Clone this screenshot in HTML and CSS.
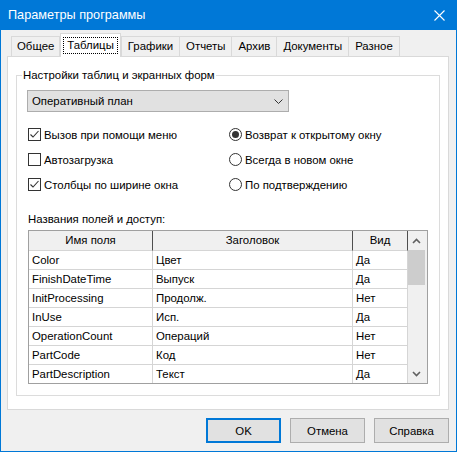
FILE: index.html
```html
<!DOCTYPE html>
<html lang="ru">
<head>
<meta charset="utf-8">
<title>Параметры программы</title>
<link rel="stylesheet" href="styles.css">
</head>
<body>
<div class="window">
  <div class="titlebar">
    <span class="title">Параметры программы</span>
    <svg class="close" width="11" height="11" viewBox="0 0 11 11"><path d="M0.5 0.5 L10.5 10.5 M10.5 0.5 L0.5 10.5" stroke="#fff" stroke-width="1.1" fill="none"/></svg>
  </div>
  <div class="client">
    <div class="tabs">
      <div class="tab">Общее</div>
      <div class="tab active"><span class="focus">Таблицы</span></div>
      <div class="tab">Графики</div>
      <div class="tab">Отчеты</div>
      <div class="tab">Архив</div>
      <div class="tab">Документы</div>
      <div class="tab">Разное</div>
    </div>
    <div class="panel">
      <fieldset class="group">
        <legend>Настройки таблиц и экранных форм</legend>
        <div class="select">
          <span>Оперативный план</span>
          <svg class="chev" width="9" height="5" viewBox="0 0 9 5"><path d="M0.5 0.5 L4.5 4.5 L8.5 0.5" stroke="#333" stroke-width="1" fill="none"/></svg>
        </div>
        <div class="options">
          <div class="opt"><span class="cb"><svg width="11" height="11" viewBox="0 0 11 11"><path d="M1.5 5.5 L4 8 L9.5 2" stroke="#333" stroke-width="1.1" fill="none"/></svg></span>Вызов при помощи меню</div>
          <div class="opt"><span class="rb on"></span>Возврат к открытому окну</div>
          <div class="opt"><span class="cb"></span>Автозагрузка</div>
          <div class="opt"><span class="rb"></span>Всегда в новом окне</div>
          <div class="opt"><span class="cb"><svg width="11" height="11" viewBox="0 0 11 11"><path d="M1.5 5.5 L4 8 L9.5 2" stroke="#333" stroke-width="1.1" fill="none"/></svg></span>Столбцы по ширине окна</div>
          <div class="opt"><span class="rb"></span>По подтверждению</div>
        </div>
        <div class="caption">Названия полей и доступ:</div>
        <div class="listview">
          <div class="grid">
            <div class="hd">Имя поля</div><div class="hd">Заголовок</div><div class="hd">Вид</div>
            <div class="cell">Color</div><div class="cell">Цвет</div><div class="cell">Да</div>
            <div class="cell">FinishDateTime</div><div class="cell">Выпуск</div><div class="cell">Да</div>
            <div class="cell">InitProcessing</div><div class="cell">Продолж.</div><div class="cell">Нет</div>
            <div class="cell">InUse</div><div class="cell">Исп.</div><div class="cell">Да</div>
            <div class="cell">OperationCount</div><div class="cell">Операций</div><div class="cell">Нет</div>
            <div class="cell">PartCode</div><div class="cell">Код</div><div class="cell">Нет</div>
            <div class="cell">PartDescription</div><div class="cell">Текст</div><div class="cell">Да</div>
          </div>
          <div class="vscroll">
            <div class="sbtn"><svg width="9" height="6" viewBox="0 0 9 6"><path d="M1 5 L4.5 1.5 L8 5" stroke="#606060" stroke-width="1.6" fill="none"/></svg></div>
            <div class="thumb"></div>
            <div class="track"></div>
            <div class="sbtn"><svg width="9" height="6" viewBox="0 0 9 6"><path d="M1 1 L4.5 4.5 L8 1" stroke="#606060" stroke-width="1.6" fill="none"/></svg></div>
          </div>
        </div>
      </fieldset>
    </div>
    <div class="buttons">
      <button class="btn default">OK</button>
      <button class="btn">Отмена</button>
      <button class="btn">Справка</button>
    </div>
  </div>
</div>
</body>
</html>
```
FILE: styles.css
```css
* { box-sizing: border-box; }
html, body { margin: 0; padding: 0; background: #f0f0f0; }
body { font: 11.4px/16px "Liberation Sans", Arial, sans-serif; color: #000; }

.window {
  width: 457px;
  height: 452px;
  border: 1px solid #0078d7;
  border-top: 0;
  background: #f0f0f0;
  display: flex;
  flex-direction: column;
}

.titlebar {
  height: 30px;
  flex: none;
  background: #0078d7;
  display: flex;
  align-items: center;
  justify-content: space-between;
  padding: 0 11px 0 7px;
}
.title { color: #fff; font-size: 12.7px; line-height: 20px; }
.close { display: block; }

.client {
  flex: 1;
  padding: 3px 7px 0 6px;
  display: flex;
  flex-direction: column;
}

.tabs {
  height: 23px;
  display: flex;
  align-items: flex-end;
  padding-left: 4px;
}
.tab {
  height: 20px;
  padding: 0 6px;
  border: 1px solid #d9d9d9;
  border-bottom: 0;
  margin-right: -1px;
  background: #f0f0f0;
  line-height: 18px;
}
.tab:first-child { padding: 0 5px; }
.tab.active {
  height: 24px;
  margin: 0 0 -1px 1px;
  padding: 3px 2px 0;
  background: #fff;
  position: relative;
  z-index: 1;
}
.focus {
  display: block;
  border: 1px dotted #000;
  padding: 0 3px;
  line-height: 15px;
}

.panel {
  height: 354px;
  background: #fff;
  border: 1px solid #d9d9d9;
  padding: 10px 8px 0 8px;
}

.group {
  margin: 0;
  padding: 7px 10px 11px 10px;
  border: 1px solid #dcdcdc;
  min-width: 0;
}
.group legend {
  padding: 0 1px;
  margin-left: -5px;
  line-height: 16px;
}

.select {
  width: 262px;
  height: 22px;
  background: #e1e1e1;
  border: 1px solid #adadad;
  display: flex;
  align-items: center;
  justify-content: space-between;
  padding: 0 5px 0 4px;
}
.chev { display: block; }

.options {
  margin: 10px 0 0 1px;
  display: grid;
  grid-template-columns: 201px 1fr;
  grid-auto-rows: 25px;
}
.opt {
  display: flex;
  align-items: center;
  gap: 3px;
}
.cb, .rb {
  width: 13px;
  height: 13px;
  border: 1px solid #333;
  background: #fff;
  display: flex;
  align-items: center;
  justify-content: center;
  flex: none;
}
.cb svg { display: block; }
.rb { border-radius: 50%; }
.rb.on::after {
  content: "";
  width: 7px;
  height: 7px;
  border-radius: 50%;
  background: #333;
}

.caption { margin: 14px 0 0 1px; }

.listview {
  margin: 3px 0 0 1px;
  width: 400px;
  height: 154px;
  border: 1px solid #a0a0a0;
  display: flex;
  overflow: hidden;
  background: #fff;
}
.grid {
  width: 379px;
  display: grid;
  grid-template-columns: 124px 200px 55px;
  grid-template-rows: 20px;
  grid-auto-rows: 19px;
  align-content: start;
}
.hd {
  background: #f0f0f0;
  border-right: 1px solid #4f4f4f;
  border-bottom: 1px solid #d5d5d5;
  text-align: center;
  line-height: 19px;
}
.cell {
  border-right: 1px solid #d5d5d5;
  border-bottom: 1px solid #d5d5d5;
  padding-left: 3px;
  line-height: 18px;
  white-space: nowrap;
}
.vscroll {
  width: 19px;
  background: #f0f0f0;
  display: flex;
  flex-direction: column;
}
.sbtn {
  height: 19px;
  flex: none;
  display: flex;
  align-items: center;
  justify-content: center;
  padding-right: 2px;
}
.sbtn svg { display: block; }
.thumb {
  height: 35px;
  width: 17px;
  background: #cdcdcd;
  flex: none;
}
.track { flex: 1; }

.buttons {
  margin-top: 8px;
  display: flex;
  justify-content: flex-end;
  gap: 9px;
}
.btn {
  width: 75px;
  height: 25px;
  background: #e1e1e1;
  border: 1px solid #adadad;
  font: 11.4px/16px "Liberation Sans", Arial, sans-serif;
  color: #000;
  padding: 0;
}
.btn.default {
  border-color: #0078d7;
  box-shadow: inset 0 0 0 1px #0078d7;
}
```
